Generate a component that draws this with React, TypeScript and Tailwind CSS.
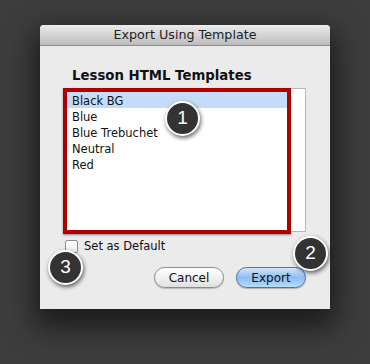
import React from "react";

const Badge = ({ n, x, y }: { n: string; x: number; y: number }) => (
  <div
    className="absolute flex h-[35px] w-[35px] items-center justify-center rounded-full border-2 border-white bg-[#333333] text-[19px] text-white shadow-[1px_2px_4px_rgba(0,0,0,0.6)]"
    style={{ left: x, top: y, fontFamily: '"Liberation Sans", Arial, sans-serif' }}
  >
    {n}
  </div>
);

export default function App() {
  const items = ["Black BG", "Blue", "Blue Trebuchet", "Neutral", "Red"];
  return (
    <div
      className="relative h-[364px] w-[370px] overflow-hidden bg-[#3d3d3d] pt-[25px] pl-[40px]"
      style={{ fontFamily: '"DejaVu Sans", "Liberation Sans", sans-serif' }}
    >
      <div className="flex h-[284px] w-[290px] flex-col overflow-hidden rounded-t-[4px] bg-[#ebebeb] shadow-[0_12px_28px_6px_rgba(0,0,0,0.55)]">
        <div className="flex h-[21px] items-center justify-center border-b border-[#8a8a8a] bg-gradient-to-b from-[#ececec] to-[#bcbcbc] text-[12.7px] text-[#222]">
          Export Using Template
        </div>
        <div className="pl-[32px] pt-[21px] text-[13.3px] font-bold leading-[17px] text-[#111]">
          Lesson HTML Templates
        </div>
        <div className="ml-[23px] mt-[4px] flex items-start">
          <div className="h-[146px] w-[228px] border-[4px] border-[#ad0000] bg-white shadow-[0_1px_2px_rgba(0,0,0,0.4)]">
            {items.map((it, i) => (
              <div
                key={it}
                className={`h-[16px] pl-[5px] pt-[2px] text-[11.5px] leading-[14px] text-[#111] ${i === 0 ? "bg-[#c5dcf8]" : ""}`}
              >
                {it}
              </div>
            ))}
          </div>
          <div className="h-[144px] w-[15px] border border-l-0 border-[#b8b8b8] bg-white" />
        </div>
        <div className="ml-[25px] mt-[4px] flex items-center gap-[6px]">
          <div className="h-[13px] w-[13px] rounded-[2px] border border-[#8d8d8d] bg-gradient-to-b from-white to-[#ededed]" />
          <span className="text-[11.5px] text-[#111]">Set as Default</span>
        </div>
        <div className="mr-[24px] mt-[12px] flex justify-end gap-[12px]">
          <div className="flex h-[21px] w-[70px] items-center justify-center rounded-full border border-[#8c8c8c] bg-gradient-to-b from-white via-[#f1f1f1] to-[#e0e0e0] text-[12px] text-[#111] shadow-[0_1px_1px_rgba(0,0,0,0.2)]">
            Cancel
          </div>
          <div className="flex h-[21px] w-[70px] items-center justify-center rounded-full border border-[#4f72a5] bg-gradient-to-b from-[#d3e6fa] via-[#8dbdf0] to-[#b5dcfb] text-[12px] text-[#111] shadow-[0_1px_1px_rgba(0,0,0,0.25)]">
            Export
          </div>
        </div>
      </div>
      <Badge n="1" x={165} y={101} />
      <Badge n="2" x={293} y={236} />
      <Badge n="3" x={48} y={250} />
    </div>
  );
}
